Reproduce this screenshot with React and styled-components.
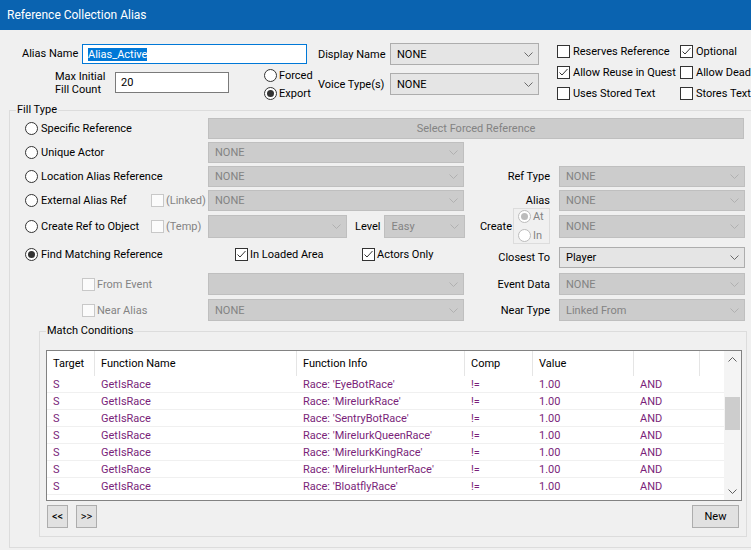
import React from 'react';
import styled, { createGlobalStyle } from 'styled-components';

const FONT = 'Roboto, "Liberation Sans", sans-serif';

const GlobalStyle = createGlobalStyle`
  html, body {
    margin: 0;
    padding: 0;
    background: #f0f0f0;
  }
  body {
    font-family: ${FONT};
    font-size: 11px;
    color: #000;
    overflow: hidden;
  }
`;

const Window = styled.div`
  width: 751px;
  height: 550px;
  overflow: hidden;
  background: #f0f0f0;
`;

const TitleBar = styled.div`
  height: 30px;
  background: #0a63b0;
  color: #fff;
  font-size: 12px;
  line-height: 31px;
  padding-left: 7px;
`;

// ---------- basic controls ----------

const Chevron = ({ up, color = '#777' }) => (
  <svg width="9" height="5" viewBox="0 0 9 5">
    <polyline
      points={up ? '0.5,4.5 4.5,0.5 8.5,4.5' : '0.5,0.5 4.5,4.5 8.5,0.5'}
      fill="none"
      stroke={color}
      strokeWidth="1"
    />
  </svg>
);

const TextBox = styled.div`
  width: ${(p) => p.$w}px;
  height: ${(p) => p.$h || 20}px;
  box-sizing: border-box;
  border: 1px solid ${(p) => (p.$focused ? '#0078d7' : '#7a7a7a')};
  background: #fff;
  display: flex;
  align-items: center;
  padding-left: 5px;
  margin-top: ${(p) => p.$mt || 0}px;
  flex: none;
`;

const Selected = styled.span`
  background: #0078d7;
  color: #fff;
  line-height: 13px;
`;

const Combo = styled.div`
  width: ${(p) => p.$w}px;
  height: ${(p) => p.$h || 21}px;
  box-sizing: border-box;
  border: 1px solid ${(p) => (p.$disabled ? '#bfbfbf' : '#adadad')};
  background: ${(p) => (p.$disabled ? '#cccccc' : '#e5e5e5')};
  color: ${(p) => (p.$disabled ? '#838383' : '#000')};
  display: flex;
  align-items: center;
  padding: 0 5px 0 6px;
  margin-top: ${(p) => p.$mt || 0}px;
  flex: none;
`;

const ComboText = styled.span`
  flex: 1;
  white-space: nowrap;
  overflow: hidden;
`;

const ComboBox = ({ w, h, mt, disabled, value }) => (
  <Combo $w={w} $h={h} $mt={mt} $disabled={disabled}>
    <ComboText>{value}</ComboText>
    <Chevron color={disabled ? '#b0b0b0' : '#6a6a6a'} />
  </Combo>
);

const PushButton = styled.div`
  width: ${(p) => p.$w}px;
  height: ${(p) => p.$h || 23}px;
  box-sizing: border-box;
  border: 1px solid ${(p) => (p.$disabled ? '#bfbfbf' : '#adadad')};
  background: ${(p) => (p.$disabled ? '#cccccc' : '#e1e1e1')};
  color: ${(p) => (p.$disabled ? '#838383' : '#000')};
  display: flex;
  align-items: center;
  justify-content: center;
  flex: none;
`;

const Circle = styled.span`
  width: 13px;
  height: 13px;
  box-sizing: border-box;
  border-radius: 50%;
  border: 1px solid ${(p) => (p.$disabled ? '#bcbcbc' : '#333')};
  background: #fff;
  display: inline-flex;
  align-items: center;
  justify-content: center;
  flex: none;

  &::after {
    content: '';
    width: 7px;
    height: 7px;
    border-radius: 50%;
    background: ${(p) => (p.$disabled ? '#bcbcbc' : '#333')};
    display: ${(p) => (p.$checked ? 'block' : 'none')};
  }
`;

const Square = styled.span`
  width: 13px;
  height: 13px;
  box-sizing: border-box;
  border: 1px solid ${(p) => (p.$disabled ? '#c8c8c8' : '#333')};
  background: ${(p) => (p.$disabled ? '#fbfbfb' : '#fff')};
  display: inline-flex;
  align-items: center;
  justify-content: center;
  flex: none;
`;

const Option = styled.span`
  display: inline-flex;
  align-items: center;
  gap: ${(p) => (p.$gap === undefined ? 3 : p.$gap)}px;
  width: ${(p) => (p.$w ? `${p.$w}px` : 'auto')};
  color: ${(p) => (p.$disabled ? '#838383' : '#000')};
  white-space: nowrap;
  flex: none;
`;

const Radio = ({ checked, disabled, w, gap, children }) => (
  <Option $w={w} $gap={gap} $disabled={disabled}>
    <Circle $checked={checked} $disabled={disabled} />
    {children}
  </Option>
);

const Check = ({ checked, disabled, w, gap, children }) => (
  <Option $w={w} $gap={gap} $disabled={disabled}>
    <Square $disabled={disabled}>
      {checked && (
        <svg width="11" height="11" viewBox="0 0 11 11">
          <polyline points="1.5,5.5 4,8 9.5,2" fill="none" stroke="#333" strokeWidth="1" />
        </svg>
      )}
    </Square>
    {children}
  </Option>
);

// ---------- top section ----------

const Top = styled.div`
  display: flex;
  height: 73px;
  box-sizing: border-box;
  padding-top: 13px;
`;

const LeftCol = styled.div`
  width: 318px;
  padding-left: 22px;
  box-sizing: border-box;
`;

const MidCol = styled.div`
  width: 222px;
  display: flex;
  flex-direction: column;
  gap: 8px;
`;

const Row = styled.div`
  display: flex;
  align-items: ${(p) => p.$align || 'center'};
  margin-top: ${(p) => p.$mt || 0}px;
`;

const FieldLabel = styled.span`
  width: ${(p) => p.$w}px;
  margin-left: ${(p) => p.$ml || 0}px;
  flex: none;
  white-space: nowrap;
  line-height: ${(p) => p.$lh || 'normal'};
  padding-top: ${(p) => p.$pt || 0}px;
`;

const RadioStack = styled.div`
  display: flex;
  flex-direction: column;
  gap: 5px;
  margin-left: 35px;
  margin-top: 1px;
`;

const FlagGrid = styled.div`
  display: grid;
  grid-template-columns: 123px auto;
  grid-auto-rows: 21px;
  align-items: center;
  padding-left: 17px;
  margin-top: -2px;
  white-space: nowrap;
`;

// ---------- group boxes ----------

const GroupBox = styled.fieldset`
  margin: 0 0 ${(p) => p.$mb || 0}px ${(p) => p.$ml}px;
  padding: 0 0 ${(p) => p.$pb || 0}px 0;
  border: 1px solid #dcdcdc;
  width: ${(p) => p.$w}px;
  min-width: 0;
  box-sizing: border-box;
`;

const GroupTitle = styled.legend`
  margin-left: 6px;
  padding: 0 1px;
  line-height: 14px;
`;

const FillGrid = styled.div`
  display: grid;
  grid-template-columns: 198px 256px 95px 185px;
  grid-template-rows: 24px 24px 24px 25px 31px 27px 26px 25px;
  margin-top: 1px;
`;

const Cell = styled.div`
  grid-column: ${(p) => p.$col};
  display: flex;
  align-items: center;
  height: ${(p) => p.$h || 21}px;
  margin-top: ${(p) => p.$mt || 0}px;
  padding-left: ${(p) => p.$pl || 0}px;
  white-space: nowrap;
`;

const SideLabel = styled.span`
  flex: 1;
  text-align: right;
  padding-right: ${(p) => (p.$pr === undefined ? 9 : p.$pr)}px;
`;

const GapLabel = styled.span`
  margin: 0 4px 0 8px;
`;

const RadioBox = styled.div`
  width: 37px;
  height: 36px;
  box-sizing: border-box;
  border: 1px solid #dcdcdc;
  align-self: flex-start;
  margin: -7px 9px 0 0;
  padding: 1px 0 0 4px;
  display: flex;
  flex-direction: column;
  gap: 6px;
`;

// ---------- conditions list ----------

const ListFrame = styled.div`
  width: 696px;
  height: 151px;
  box-sizing: border-box;
  border: 1px solid #828282;
  background: #fff;
  margin: 12px 0 0 6px;
  display: flex;
  overflow: hidden;
`;

const ListBody = styled.div`
  width: 677px;
  display: flex;
  flex-direction: column;
`;

const COLS = [48, 202, 168, 68, 101, 66, 24];

const ListRow = styled.div`
  display: grid;
  grid-template-columns: ${COLS.map((c) => `${c}px`).join(' ')};
  height: ${(p) => (p.$header ? 25 : 17)}px;
  box-sizing: border-box;
  border-bottom: ${(p) => (p.$header ? 'none' : '1px solid #f0f0f0')};
  color: ${(p) => (p.$header ? '#000' : '#7a1f7a')};
  flex: none;
`;

const ListCell = styled.div`
  padding-left: 6px;
  display: flex;
  align-items: center;
  white-space: nowrap;
  overflow: hidden;
  border-right: ${(p) => (p.$sep ? '1px solid #e5e5e5' : 'none')};
`;

const ScrollBar = styled.div`
  width: 17px;
  background: #f4f4f4;
  display: flex;
  flex-direction: column;
  align-items: center;
`;

const ScrollArrow = styled.div`
  height: 17px;
  width: 17px;
  display: flex;
  align-items: center;
  justify-content: center;
  flex: none;
`;

const ScrollTrack = styled.div`
  flex: 1;
  width: 15px;
`;

const ScrollThumb = styled.div`
  width: 15px;
  height: 33px;
  margin-top: 29px;
  background: #cdcdcd;
`;

const ButtonRow = styled.div`
  display: flex;
  align-items: center;
  margin: 4px 7px 0 7px;
  gap: 8px;
`;

const Spacer = styled.div`
  flex: 1;
`;

const RACES = [
  'EyeBotRace',
  'MirelurkRace',
  'SentryBotRace',
  'MirelurkQueenRace',
  'MirelurkKingRace',
  'MirelurkHunterRace',
  'BloatflyRace',
];

const HEADERS = ['Target', 'Function Name', 'Function Info', 'Comp', 'Value', '', ''];

const ConditionList = () => (
  <ListFrame>
    <ListBody>
      <ListRow $header>
        {HEADERS.map((h, i) => (
          <ListCell key={i} $sep={i < 6}>
            {h}
          </ListCell>
        ))}
      </ListRow>
      {RACES.map((race) => (
        <ListRow key={race}>
          <ListCell>S</ListCell>
          <ListCell>GetIsRace</ListCell>
          <ListCell>Race: '{race}'</ListCell>
          <ListCell>!=</ListCell>
          <ListCell>1.00</ListCell>
          <ListCell>AND</ListCell>
          <ListCell />
        </ListRow>
      ))}
      <ListRow>
        <ListCell />
      </ListRow>
    </ListBody>
    <ScrollBar>
      <ScrollArrow>
        <Chevron up color="#606060" />
      </ScrollArrow>
      <ScrollTrack>
        <ScrollThumb />
      </ScrollTrack>
      <ScrollArrow>
        <Chevron color="#606060" />
      </ScrollArrow>
    </ScrollBar>
  </ListFrame>
);

const App = () => {
  return (
    <>
      <GlobalStyle />
      <Window>
        <TitleBar>Reference Collection Alias</TitleBar>

        <Top>
          <LeftCol>
            <Row>
              <FieldLabel $w={60}>Alias Name</FieldLabel>
              <TextBox $w={225} $mt={1} $focused>
                <Selected>Alias_Active</Selected>
              </TextBox>
            </Row>
            <Row $align="flex-start" $mt={4}>
              <FieldLabel $w={60} $ml={33} $lh="13px" $pt={2}>
                Max Initial
                <br />
                Fill Count
              </FieldLabel>
              <TextBox $w={114} $h={21} $mt={4}>
                20
              </TextBox>
              <RadioStack>
                <Radio gap={2}>Forced</Radio>
                <Radio gap={2} checked>
                  Export
                </Radio>
              </RadioStack>
            </Row>
          </LeftCol>

          <MidCol>
            <Row>
              <FieldLabel $w={72}>Display Name</FieldLabel>
              <ComboBox w={149} h={22} value="NONE" />
            </Row>
            <Row>
              <FieldLabel $w={72}>Voice Type(s)</FieldLabel>
              <ComboBox w={149} h={22} value="NONE" />
            </Row>
          </MidCol>

          <FlagGrid>
            <Check>Reserves Reference</Check>
            <Check checked>Optional</Check>
            <Check checked>Allow Reuse in Quest</Check>
            <Check>Allow Dead</Check>
            <Check>Uses Stored Text</Check>
            <Check>Stores Text</Check>
          </FlagGrid>
        </Top>

        <GroupBox $ml={9} $w={760}>
          <GroupTitle>Fill Type</GroupTitle>
          <FillGrid>
            {/* Specific Reference */}
            <Cell $col="1" $pl={15}>
              <Radio>Specific Reference</Radio>
            </Cell>
            <Cell $col="2 / 5">
              <PushButton $w={536} $h={21} $disabled>
                Select Forced Reference
              </PushButton>
            </Cell>

            {/* Unique Actor */}
            <Cell $col="1" $pl={15}>
              <Radio>Unique Actor</Radio>
            </Cell>
            <Cell $col="2">
              <ComboBox w={256} disabled value="NONE" />
            </Cell>
            <Cell $col="3 / 5" />

            {/* Location Alias Reference */}
            <Cell $col="1" $pl={15}>
              <Radio>Location Alias Reference</Radio>
            </Cell>
            <Cell $col="2">
              <ComboBox w={256} disabled value="NONE" />
            </Cell>
            <Cell $col="3">
              <SideLabel>Ref Type</SideLabel>
            </Cell>
            <Cell $col="4">
              <ComboBox w={186} disabled value="NONE" />
            </Cell>

            {/* External Alias Ref */}
            <Cell $col="1" $pl={15}>
              <Radio w={126}>External Alias Ref</Radio>
              <Check gap={2} disabled>
                (Linked)
              </Check>
            </Cell>
            <Cell $col="2">
              <ComboBox w={256} disabled value="NONE" />
            </Cell>
            <Cell $col="3">
              <SideLabel>Alias</SideLabel>
            </Cell>
            <Cell $col="4">
              <ComboBox w={186} disabled value="NONE" />
            </Cell>

            {/* Create Ref to Object */}
            <Cell $col="1" $pl={15} $h={23}>
              <Radio w={126}>Create Ref to Object</Radio>
              <Check gap={2} disabled>
                (Temp)
              </Check>
            </Cell>
            <Cell $col="2" $h={23}>
              <ComboBox w={139} h={23} disabled value="" />
              <GapLabel>Level</GapLabel>
              <ComboBox w={81} h={23} disabled value="Easy" />
            </Cell>
            <Cell $col="3" $h={23}>
              <SideLabel $pr={1}>Create</SideLabel>
              <RadioBox>
                <Radio gap={2} disabled checked>
                  At
                </Radio>
                <Radio gap={2} disabled>
                  In
                </Radio>
              </RadioBox>
            </Cell>
            <Cell $col="4" $h={23}>
              <ComboBox w={186} h={23} disabled value="NONE" />
            </Cell>

            {/* Find Matching Reference */}
            <Cell $col="1" $pl={15} $h={17}>
              <Radio checked>Find Matching Reference</Radio>
            </Cell>
            <Cell $col="2" $pl={27} $h={17}>
              <Check gap={2} checked w={127}>
                In Loaded Area
              </Check>
              <Check gap={2} checked>
                Actors Only
              </Check>
            </Cell>
            <Cell $col="3" $mt={1}>
              <SideLabel>Closest To</SideLabel>
            </Cell>
            <Cell $col="4" $mt={1}>
              <ComboBox w={186} value="Player" />
            </Cell>

            {/* From Event */}
            <Cell $col="1" $pl={72} $h={22}>
              <Check gap={2} disabled>
                From Event
              </Check>
            </Cell>
            <Cell $col="2" $h={22}>
              <ComboBox w={256} h={22} disabled value="" />
            </Cell>
            <Cell $col="3" $h={22}>
              <SideLabel>Event Data</SideLabel>
            </Cell>
            <Cell $col="4" $h={22}>
              <ComboBox w={186} h={22} disabled value="NONE" />
            </Cell>

            {/* Near Alias */}
            <Cell $col="1" $pl={72} $h={22}>
              <Check gap={2} disabled>
                Near Alias
              </Check>
            </Cell>
            <Cell $col="2" $h={22}>
              <ComboBox w={256} h={22} disabled value="NONE" />
            </Cell>
            <Cell $col="3" $h={22}>
              <SideLabel>Near Type</SideLabel>
            </Cell>
            <Cell $col="4" $h={22}>
              <ComboBox w={186} h={22} disabled value="Linked From" />
            </Cell>
          </FillGrid>

          <GroupBox $ml={29} $w={708} $mb={10} $pb={8}>
            <GroupTitle>Match Conditions</GroupTitle>
            <ConditionList />
            <ButtonRow>
              <PushButton $w={21}>&lt;&lt;</PushButton>
              <PushButton $w={21}>&gt;&gt;</PushButton>
              <Spacer />
              <PushButton $w={47}>New</PushButton>
            </ButtonRow>
          </GroupBox>
        </GroupBox>
      </Window>
    </>
  );
};

export default App;
